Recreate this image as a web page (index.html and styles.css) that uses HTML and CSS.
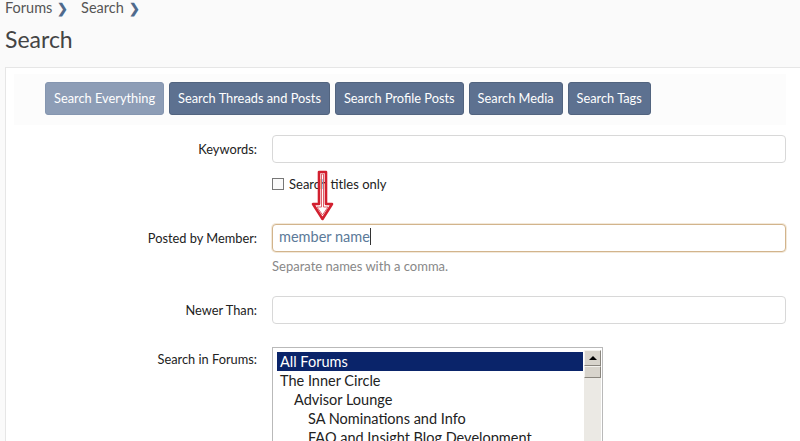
FILE: index.html
```html
<!DOCTYPE html>
<html lang="en">
<head>
  <meta charset="UTF-8">
  <title>Search</title>
  <link rel="stylesheet" href="styles.css">
</head>
<body>
  <nav class="crumbs">
    <span>Forums</span><span class="chev">&#x276F;</span>
    <span>Search</span><span class="chev">&#x276F;</span>
  </nav>
  <h1 class="title">Search</h1>

  <div class="block">
    <div class="tabs">
      <a class="tab active">Search Everything</a>
      <a class="tab">Search Threads and Posts</a>
      <a class="tab">Search Profile Posts</a>
      <a class="tab">Search Media</a>
      <a class="tab">Search Tags</a>
    </div>

    <form class="form">
      <label class="lbl">Keywords:</label>
      <div class="field f-keywords">
        <div class="input"></div>
        <label class="check"><span class="box"></span>Search titles only</label>
      </div>

      <label class="lbl">Posted by Member:</label>
      <div class="field f-member">
        <div class="input focused">member name<span class="caret"></span></div>
        <p class="hint">Separate names with a comma.</p>
      </div>

      <label class="lbl">Newer Than:</label>
      <div class="field f-newer">
        <div class="input"></div>
      </div>

      <label class="lbl lbl-list">Search in Forums:</label>
      <div class="field">
        <div class="listbox">
          <ul class="options">
            <li class="sel">All Forums</li>
            <li>The Inner Circle</li>
            <li class="d1">Advisor Lounge</li>
            <li class="d2">SA Nominations and Info</li>
            <li class="d2">FAQ and Insight Blog Development</li>
          </ul>
          <div class="scrollbar">
            <div class="sb-btn"><span class="up"></span></div>
            <div class="sb-thumb"></div>
          </div>
        </div>
      </div>
    </form>

    <svg class="arrow" width="24" height="52" viewBox="0 0 24 52">
      <path d="M8 2 H15 V34 H21 L11.5 49 L2 34 H8 Z" fill="none" stroke="#d2202f" stroke-width="2.6" stroke-linejoin="round"/>
      <path d="M10.5 4 H12.5 V37 H17 L11.5 45 L6 37 H10.5 Z" fill="none" stroke="#e0606a" stroke-width="1"/>
    </svg>
  </div>
</body>
</html>
```

FILE: styles.css
```css
*, *::before, *::after { box-sizing: border-box; }
body {
  margin: 0;
  background: #fafafa;
  color: #222;
  font-family: Lato, 'Noto Sans', sans-serif;
  font-size: 13px;
  overflow: hidden;
}

.crumbs {
  padding: 0 5px;
  height: 16px;
  line-height: 16px;
  font-size: 14.5px;
  color: #555;
}
.crumbs .chev {
  color: #4f6a8c;
  font-size: 13px;
  margin: 0 9px 0 5px;
  font-weight: bold;
}

.title {
  margin: 8px 0 0 5px;
  font-size: 23px;
  font-weight: 400;
  color: #444;
  line-height: 30px;
}

.block {
  position: relative;
  margin: 13px 0 0 5px;
  background: #fff;
  border: 1px solid #e6e6e6;
  border-right: none;
  padding: 6px 14px 0 8px;
  height: 400px;
}

.tabs {
  display: flex;
  gap: 5px;
  background: #fcfcfc;
  padding: 8px 0 10px 31px;
}
.tab {
  display: block;
  height: 33px;
  line-height: 31px;
  padding: 0 8px;
  border-radius: 3px;
  background: #5d7190;
  color: #fff;
  font-size: 12.8px;
  border: 1px solid #52647f;
}
.tab.active {
  background: #8d9db6;
  border-color: #8596b0;
}

.form {
  display: grid;
  grid-template-columns: 243px 1fr;
  column-gap: 15px;
  margin-top: 10px;
}
.lbl {
  text-align: right;
  padding-top: 6px;
  color: #222;
  font-size: 12.8px;
}
.field { margin-bottom: 0; }
.f-keywords { margin-bottom: 32px; }
.f-member { margin-bottom: 22px; }
.f-newer { margin-bottom: 23px; }

.input {
  height: 28px;
  border: 1px solid #d8d8d8;
  border-radius: 4px;
  background: #fff;
  font-size: 14.5px;
  padding: 3px 6px;
}
.input.focused {
  border-color: #d2b48c;
  color: #5c7a99;
  box-shadow: 0 0 0 1px #f3e9da;
}
.caret {
  display: inline-block;
  width: 1px;
  height: 17px;
  background: #333;
  vertical-align: -3px;
}

.check {
  display: flex;
  align-items: center;
  gap: 5px;
  margin-top: 13px;
  height: 16px;
  color: #222;
  font-size: 13px;
}
.box {
  width: 12px;
  height: 12px;
  border: 1px solid #777;
  background: #fafafa;
}

.hint {
  margin: 6px 0 0;
  color: #888;
  font-size: 13px;
  line-height: 16px;
}

.lbl-list { padding-top: 4px; }

.listbox {
  display: flex;
  width: 331px;
  height: 120px;
  border: 1px solid #b9b9b9;
  background: #fff;
  padding: 2px 1px 0 4px;
}
.options {
  list-style: none;
  margin: 0;
  padding: 2px 0 0;
  flex: 1;
  font-size: 14.5px;
}
.options li {
  height: 19px;
  line-height: 19px;
  padding-left: 3px;
  white-space: nowrap;
}
.options li.sel {
  background: #0a246a;
  color: #fff;
}
.options .d1 { padding-left: 17px; }
.options .d2 { padding-left: 31px; }

.scrollbar {
  width: 17px;
  background: #ebe9e4;
  margin-left: 1px;
}
.sb-btn {
  height: 16px;
  background: #d8d4cc;
  border: 1px solid;
  border-color: #f4f2ee #8a867e #8a867e #f4f2ee;
  display: flex;
  align-items: center;
  justify-content: center;
}
.sb-btn .up {
  width: 0;
  height: 0;
  border-left: 4px solid transparent;
  border-right: 4px solid transparent;
  border-bottom: 4px solid #000;
}
.sb-thumb {
  height: 12px;
  background: #d8d4cc;
  border: 1px solid;
  border-color: #f4f2ee #8a867e #8a867e #f4f2ee;
}

.arrow {
  position: absolute;
  left: 305px;
  top: 102px;
}
```
